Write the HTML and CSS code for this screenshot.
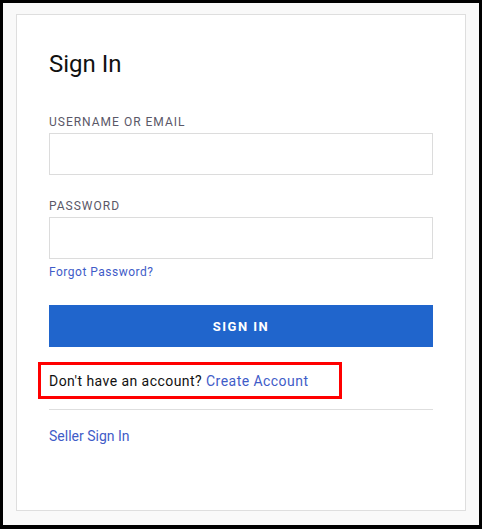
FILE: index.html
```html
<!DOCTYPE html>
<html lang="en">
<head>
  <meta charset="UTF-8" />
  <meta name="viewport" content="width=device-width, initial-scale=1.0" />
  <title>Sign In</title>
  <link rel="stylesheet" href="styles.css">
</head>
<body>
  <div class="frame">
    <div class="card">
      <h2>Sign In</h2>
      <form id="signInForm">
        <div class="input-group">
          <label for="username">Username or Email</label>
          <input type="text" id="username" name="username" />
        </div>
        <div class="input-group">
          <label for="password">Password</label>
          <input type="password" id="password" name="password" />
        </div>
        <a href="#" class="forgot">Forgot Password?</a>
        <button type="submit" class="btn">Sign In</button>
      </form>
      <div class="signup-row">
        Don't have an account? <a href="#">Create Account</a>
      </div>
      <hr class="divider" />
      <a href="#" class="seller">Seller Sign In</a>
    </div>
  </div>
</body>
</html>
```

FILE: styles.css
```css
body {
  margin: 0;
  padding: 0;
  font-family: Roboto, 'Liberation Sans', sans-serif;
  background: #000;
}
.frame {
  width: 482px;
  height: 529px;
  box-sizing: border-box;
  border: 3px solid #000;
  border-bottom-width: 4px;
  background: #f9f9f9;
  padding: 11px 13px;
}
.card {
  width: 450px;
  height: 497px;
  box-sizing: border-box;
  background: #fff;
  border: 1px solid #dedede;
  padding: 35px 32px 0;
}
h2 {
  margin: 0 0 36px;
  font-size: 24px;
  line-height: 28px;
  font-weight: 400;
  color: #111;
}
.input-group {
  margin-bottom: 23px;
}
.input-group:last-of-type {
  margin-bottom: 5px;
}
.input-group label {
  display: block;
  margin-bottom: 3px;
  font-size: 12px;
  line-height: 16px;
  letter-spacing: 1px;
  text-transform: uppercase;
  color: #5a5868;
}
.input-group input {
  display: block;
  width: 100%;
  height: 42px;
  box-sizing: border-box;
  border: 1px solid #dcdcdc;
  border-radius: 0;
  outline: none;
  padding: 0 12px;
}
.forgot {
  display: block;
  font-size: 12px;
  line-height: 16px;
  color: #3f5cc8;
  text-decoration: none;
  letter-spacing: 0.5px;
}
.btn {
  display: block;
  width: 100%;
  height: 42px;
  margin-top: 25px;
  background: #2065cc;
  color: #fff;
  border: none;
  font-family: inherit;
  font-size: 13px;
  font-weight: 700;
  letter-spacing: 1.5px;
  text-transform: uppercase;
  cursor: pointer;
}
.signup-row {
  width: 304px;
  box-sizing: border-box;
  margin: 15px 0 0 -11px;
  padding: 6px 8px 5px;
  border: 3px solid #f00;
  font-size: 14px;
  line-height: 20px;
  letter-spacing: 0.45px;
  color: #111;
}
.signup-row a,
.seller {
  color: #3f5cc8;
  text-decoration: none;
}
.divider {
  margin: 10px 0 16px;
  border: none;
  border-top: 1px solid #dedede;
}
.seller {
  display: block;
  font-size: 14px;
  line-height: 20px;
}
```
